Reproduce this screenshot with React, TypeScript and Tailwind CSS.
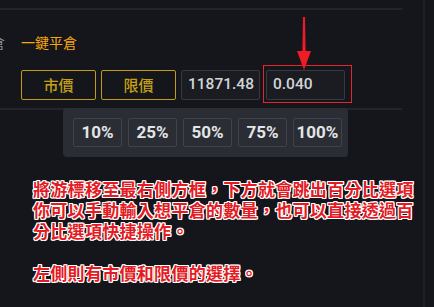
import React from 'react'

const percents = ['10%', '25%', '50%', '75%', '100%']

export default function App() {
    return (
        <div lang="zh-TW" className="w-[434px] h-[307px] bg-[#15161b] flex overflow-hidden font-['Noto_Sans_CJK_TC',sans-serif]">
            <div className="w-[423px] relative">
                <div className="mt-[8px] h-[2px] w-[402px] bg-[#23252b]" />

                {/* header row */}
                <div className="mt-[22px] h-[20px] flex items-center">
                    <span className="ml-[-9px] text-[14px] text-[#8e9097] leading-none">倉</span>
                    <span className="ml-[16px] text-[14px] text-[#f5a70c] leading-none">一鍵平倉</span>
                </div>

                {/* order type + inputs */}
                <div className="mt-[18px] ml-[21px] flex gap-[5px] h-[30px]">
                    <button className="w-[75px] h-full border-[1.5px] border-[#c49a14] rounded-[2px] text-[15px] text-[#c6a116] font-medium">
                        市價
                    </button>
                    <button className="w-[75px] h-full border-[1.5px] border-[#c49a14] rounded-[2px] text-[15px] text-[#c6a116] font-medium">
                        限價
                    </button>
                    <div className="w-[79px] h-full border border-[#363941] bg-[#1a1c21] rounded-[2px] flex items-center pl-[6px] font-['Roboto',sans-serif] font-medium text-[15.5px] text-[#d2d4d8]">
                        11871.48
                    </div>
                    <div className="ml-[1px] w-[79px] h-full border border-[#363941] bg-[#1a1c21] rounded-[2px] flex items-center pl-[6px] font-['Roboto',sans-serif] font-medium text-[15.5px] text-[#d2d4d8]">
                        0.040
                    </div>
                </div>

                <div className="mt-[8px] h-[2px] w-[402px] bg-[#23252b]" />

                {/* note */}
                <div className="mt-[68px] pl-[33px] text-[17px] leading-[21px] font-bold text-[#e31b24] tracking-[0.3px] [text-shadow:0_0_1px_#fff,1px_1px_0_#fff,-1px_-1px_0_#fff,1px_-1px_0_#fff,-1px_1px_0_#fff,0_1px_0_#fff,0_-1px_0_#fff,1px_0_0_#fff,-1px_0_0_#fff]">
                    <p className="whitespace-nowrap">將游標移至最右側方框，下方就會跳出百分比選項</p>
                    <p className="whitespace-nowrap">你可以手動輸入想平倉的數量，也可以直接透過百</p>
                    <p className="whitespace-nowrap">分比選項快捷操作。</p>
                    <p className="h-[21px]" />
                    <p className="whitespace-nowrap">左側則有市價和限價的選擇。</p>
                </div>

                {/* percent popover */}
                <div className="absolute left-[63px] top-[108px] w-[285px] h-[49px] rounded-[4px] bg-[#2a2d34] flex items-center gap-[6px] pl-[10px]">
                    {percents.map((p) => (
                        <div
                            key={p}
                            className="w-[49px] h-[29px] border border-[#40434b] rounded-[2px] flex items-center justify-center font-['Roboto',sans-serif] font-bold text-[17px] text-[#e4e5e7]"
                        >
                            {p}
                        </div>
                    ))}
                </div>

                {/* highlight box */}
                <div className="absolute left-[263px] top-[65px] w-[89px] h-[38px] border-[1.5px] border-[#e3262d]" />

                {/* arrow */}
                <svg className="absolute left-[296px] top-[17px]" width="16" height="54" viewBox="0 0 16 54">
                    <polygon points="7,0 9,0 9.6,34 15,34 8,53 1,34 6.4,34" fill="#ee1c25" />
                </svg>
            </div>
            <div className="w-[2px] h-full bg-[#1f2127]" />
            <div className="flex-1" />
        </div>
    )
}
